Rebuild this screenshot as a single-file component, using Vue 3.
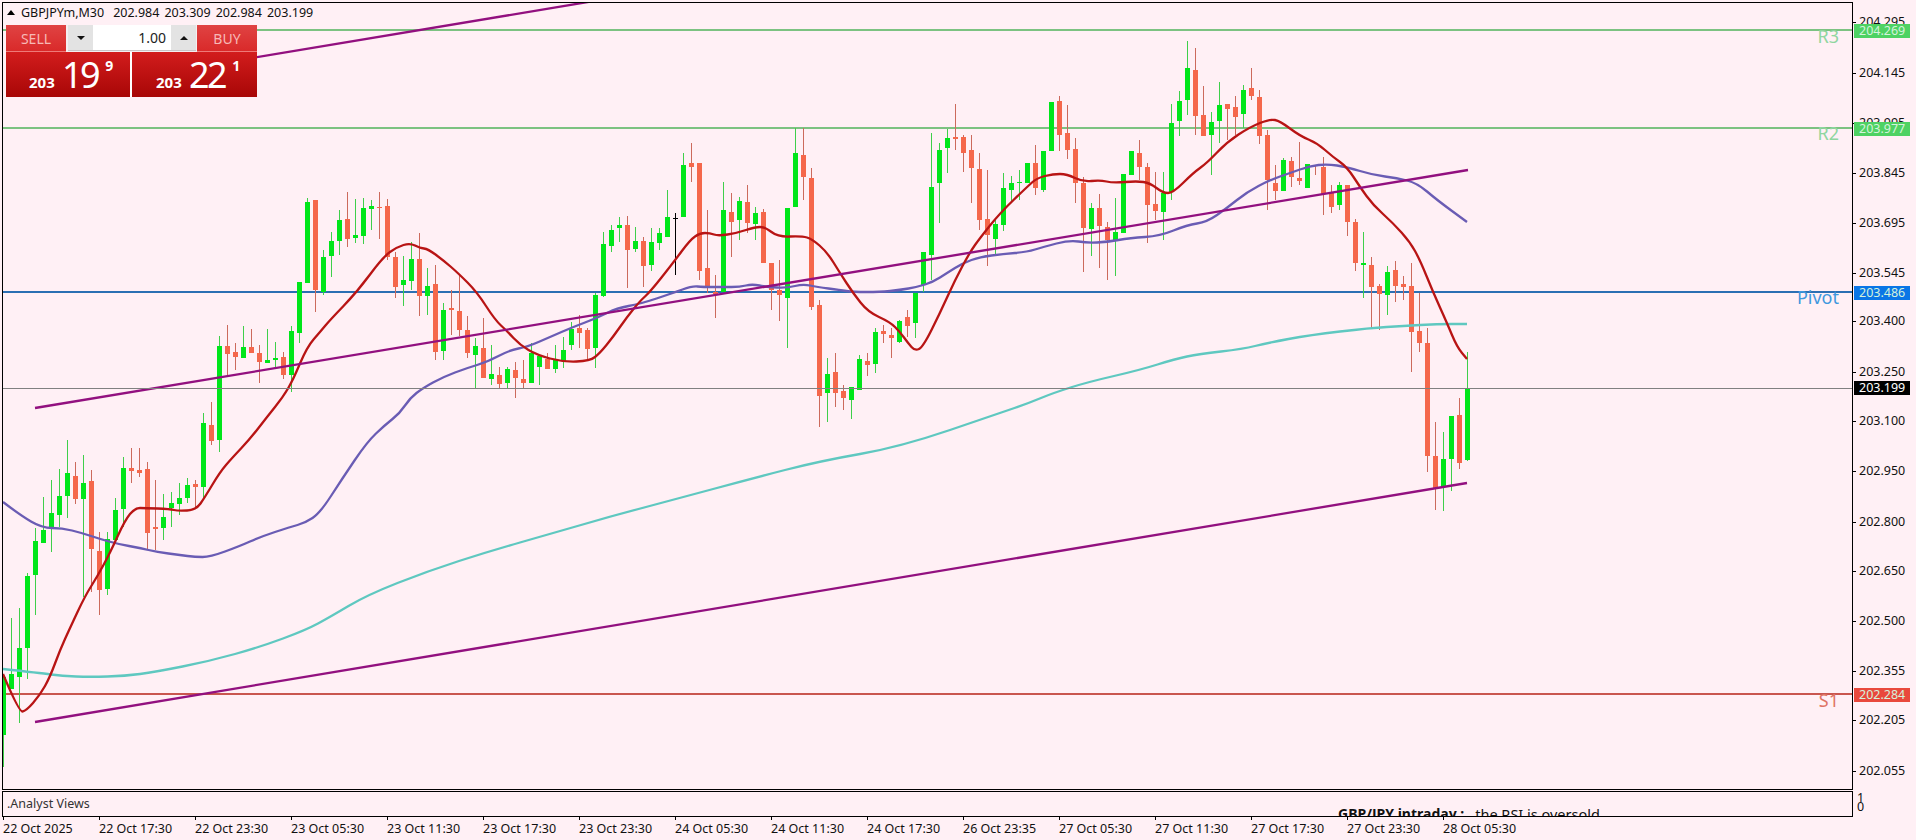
<script setup>
// bar: [direction (1 up, 0 down, 2 doji), high, body top, body bottom, low] in chart pixels
const bars = [
  [1,677,677,735,767],[1,618,674,689,689],[1,608,648,677,723],[1,573,576,648,679],[1,528,541,575,615],[1,497,530,543,543],
  [1,480,513,527,552],[1,469,496,515,527],[1,440,473,496,518],[0,462,476,499,504],[1,455,483,499,597],[0,470,481,549,592],
  [0,532,551,590,615],[1,532,539,589,595],[1,498,510,540,543],[1,457,468,509,527],[0,448,468,471,483],[0,448,470,473,477],
  [0,462,469,533,550],[0,480,527,529,550],[1,494,517,528,540],[1,492,503,508,527],[1,483,498,504,515],[1,478,485,498,503],
  [0,480,484,487,508],[1,413,423,487,500],[0,402,425,441,445],[1,336,346,440,452],[0,325,346,354,375],[0,343,352,357,370],
  [1,326,347,358,358],[0,329,347,353,353],[0,345,353,362,383],[1,329,360,363,363],[1,342,358,360,368],[0,352,357,375,379],
  [1,326,331,375,392],[1,282,282,333,343],[1,198,202,283,283],[0,200,200,290,312],[1,250,257,292,295],[1,232,241,256,277],
  [1,210,220,241,255],[0,192,219,239,247],[1,199,235,238,243],[1,198,208,236,244],[1,200,206,209,230],[0,192,207,208,239],
  [0,199,206,257,260],[0,252,257,287,298],[1,256,280,285,306],[1,242,259,281,290],[0,233,259,296,316],[1,268,286,296,315],
  [0,265,284,352,360],[1,303,310,351,360],[0,290,308,310,335],[0,275,311,330,336],[0,316,330,353,358],[1,338,346,355,389],
  [0,318,348,378,378],[1,345,374,379,385],[0,367,375,384,389],[1,367,369,383,389],[0,362,370,378,398],[0,360,379,383,389],
  [1,343,353,383,383],[1,356,356,367,385],[0,353,359,369,369],[1,345,360,369,373],[1,337,350,361,368],[1,322,329,345,350],
  [0,315,328,333,348],[0,328,330,349,359],[1,293,295,348,368],[1,232,244,296,297],[1,225,230,246,252],[1,217,225,228,242],
  [0,216,225,250,288],[1,227,241,249,252],[0,237,241,266,287],[1,228,242,265,271],[1,228,233,243,250],[1,190,217,237,237],
  [2,213,218,219,275],[1,153,165,217,217],[0,143,163,167,182],[0,163,163,271,280],[0,210,268,287,293],[0,275,292,294,318],
  [1,182,210,292,292],[0,193,212,222,257],[1,197,201,220,240],[0,185,202,223,233],[1,207,213,224,240],[0,209,212,263,263],
  [0,263,263,290,310],[0,260,290,295,321],[1,208,208,298,348],[1,128,153,207,207],[0,128,155,177,200],[0,168,178,307,310],
  [0,300,305,396,427],[1,358,374,393,422],[0,353,372,393,407],[0,385,391,398,410],[1,387,387,400,419],[1,355,359,390,390],
  [0,353,361,365,376],[1,328,332,364,373],[0,325,331,334,343],[0,328,335,338,358],[1,320,321,342,343],[0,310,317,326,337],
  [1,293,293,323,338],[1,252,252,285,292],[1,133,187,255,280],[1,143,150,183,223],[1,129,138,148,173],[0,104,137,139,150],
  [0,135,137,153,172],[0,135,150,168,203],[0,153,169,220,230],[0,170,219,235,266],[1,218,224,239,255],[1,173,188,225,231],
  [1,176,183,190,202],[1,170,182,183,200],[1,163,163,183,183],[0,145,163,188,195],[1,151,151,190,192],[1,102,102,151,151],
  [0,96,101,135,151],[0,105,133,150,159],[0,138,149,183,203],[0,177,183,228,272],[1,203,208,229,256],[0,194,208,226,268],
  [0,222,227,240,280],[1,198,232,240,276],[1,174,174,233,233],[1,151,151,175,175],[0,140,153,167,180],[0,163,167,205,243],
  [0,172,204,211,220],[1,172,193,212,240],[1,104,123,192,200],[1,91,101,121,136],[1,41,68,100,115],[0,48,70,116,135],
  [0,86,115,136,136],[1,112,122,135,175],[1,82,105,121,143],[0,104,104,109,140],[0,96,107,117,135],[1,85,90,114,128],
  [0,68,88,96,100],[0,90,97,136,144],[0,130,135,180,210],[0,165,183,191,200],[1,158,160,191,191],[0,157,161,177,187],
  [0,142,178,181,185],[1,164,164,188,188],[0,165,165,166,175],[0,157,167,194,215],[0,185,193,207,213],[1,182,185,205,210],
  [0,185,185,222,236],[0,219,222,263,271],[1,232,263,265,298],[0,257,265,287,328],[0,284,286,294,330],[1,266,272,295,315],
  [0,261,270,286,302],[0,276,284,287,300],[0,263,286,332,372],[0,293,331,343,352],[0,328,343,456,472],[0,422,456,488,510],
  [1,432,459,487,511],[1,416,416,459,491],[0,398,415,463,469],[1,352,388,460,461],
]

const redLine = [
  [3,674],[19,712],[26,711],[40,695],[50,677],[60,650],[70,628],[85,596],[97,577],[110,553],[125,520],[135,508],[145,508],
  [170,509],[178,511],[196,510],[205,497],[220,472],[232,458],[250,439],[267,417],[283,397],[293,380],[307,347],[320,332],
  [330,320],[357,292],[383,257],[397,247],[410,243],[420,248],[428,249],[443,260],[458,273],[477,292],[495,320],[507,331],
  [520,345],[537,355],[563,362],[590,361],[600,353],[613,337],[627,317],[640,301],[650,292],[673,263],[690,240],[700,233],
  [710,233],[718,236],[737,233],[755,227],[765,227],[778,237],[802,236],[812,239],[827,252],[840,273],[853,293],[868,312],
  [890,322],[900,332],[908,343],[915,351],[923,347],[940,313],[955,280],[970,252],[980,238],[1000,213],[1027,187],[1037,178],
  [1053,174],[1067,174],[1083,182],[1100,180],[1113,183],[1137,181],[1150,183],[1163,193],[1173,193],[1193,173],[1207,163],
  [1227,142],[1250,127],[1270,119],[1280,121],[1300,136],[1317,143],[1333,157],[1347,167],[1360,187],[1373,205],[1393,223],
  [1410,242],[1420,260],[1433,292],[1447,323],[1457,347],[1467,359],
]

const blueLine = [
  [3,502],[20,515],[42,528],[62,528],[82,533],[100,539],[118,544],[140,548],[157,552],[180,555],[195,557],[210,557],[240,546],
  [260,537],[290,527],[305,523],[320,513],[342,479],[367,442],[385,425],[400,413],[410,398],[423,388],[443,377],[467,368],
  [487,362],[510,350],[527,347],[550,337],[573,327],[597,318],[617,308],[640,304],[673,293],[692,286],[703,287],[723,287],
  [740,287],[752,284],[767,287],[787,288],[803,284],[817,287],[840,290],[853,292],[880,292],[900,290],[917,287],[933,282],
  [947,273],[963,263],[980,257],[1003,254],[1027,252],[1043,247],[1070,240],[1087,243],[1107,242],[1130,238],[1160,236],
  [1187,225],[1207,222],[1227,208],[1247,192],[1270,180],[1290,173],[1310,166],[1327,164],[1347,167],[1373,175],[1397,178],
  [1417,183],[1437,200],[1467,222],
]

const tealLine = [
  [3,669],[40,673],[62,676],[90,677],[125,676],[155,672],[210,661],[260,647],[306,630],[330,617],[367,595],[428,571],[490,551],
  [550,534],[612,516],[680,498],[750,479],[820,461],[900,447],[1000,413],[1029,403],[1053,393],[1088,382],[1140,370],[1175,359],
  [1199,354],[1243,349],[1267,343],[1310,335],[1370,328],[1403,326],[1437,324],[1467,324],
]

// rounds the corners between the sampled points
const toPath = (line) => {
  let d = `M${line[0][0]} ${line[0][1]}`
  for (let i = 1; i < line.length - 1; i++) {
    const midX = (line[i][0] + line[i + 1][0]) / 2
    const midY = (line[i][1] + line[i + 1][1]) / 2
    d += ` Q${line[i][0]} ${line[i][1]} ${midX} ${midY}`
  }
  const last = line[line.length - 1]
  return `${d} L${last[0]} ${last[1]}`
}

const levels = [
  { name: "R3", y: 30, price: "204.269", line: "#7cc281", text: "#8fd6a0", tag: "#4ed263", base: 43 },
  { name: "R2", y: 128, price: "203.977", line: "#7cc281", text: "#8fd6a0", tag: "#4ed263", base: 140 },
  { name: "Pivot", y: 292, price: "203.486", line: "#2b6fb3", text: "#3f98de", tag: "#0a76e6", base: 304 },
  { name: "S1", y: 694, price: "202.284", line: "#c9564f", text: "#df7464", tag: "#e9483c", base: 707 },
]

const axisPrices = [
  ["204.295", 22], ["204.145", 73], ["203.995", 123], ["203.845", 173], ["203.695", 223], ["203.545", 273],
  ["203.400", 321], ["203.250", 372], ["203.100", 421], ["202.950", 471], ["202.800", 522], ["202.650", 571],
  ["202.500", 621], ["202.355", 671], ["202.205", 720], ["202.055", 771],
]

const times = [
  "22 Oct 2025", "22 Oct 17:30", "22 Oct 23:30", "23 Oct 05:30", "23 Oct 11:30", "23 Oct 17:30", "23 Oct 23:30", "24 Oct 05:30",
  "24 Oct 11:30", "24 Oct 17:30", "26 Oct 23:35", "27 Oct 05:30", "27 Oct 11:30", "27 Oct 17:30", "27 Oct 23:30", "28 Oct 05:30",
]

const bodyColor = (dir) => (dir === 1 ? "#00e61a" : dir === 0 ? "#f5674b" : "#000")
const wickColor = (dir) => (dir === 1 ? "#3fcf4a" : dir === 0 ? "#cc6a5c" : "#000")
</script>

<template>
  <div class="terminal">
    <div class="chart-row">
      <div class="plot">
        <svg class="plot-svg" width="1849" height="786" viewBox="3 3 1849 786">
          <line v-for="l in levels" :key="l.name" x1="3" x2="1852" :y1="l.y" :y2="l.y" :stroke="l.line" stroke-width="2" />
          <g shape-rendering="crispEdges">
            <g v-for="(b, i) in bars" :key="i">
              <rect :x="3 + 8 * i" :y="b[1]" width="1" :height="b[4] - b[1]" :fill="wickColor(b[0])" />
              <rect v-if="b[0] !== 2" :x="1 + 8 * i" :y="b[2]" width="5" :height="b[3] - b[2]" :fill="bodyColor(b[0])" />
              <rect v-else :x="1 + 8 * i" :y="b[2]" width="5" height="1" fill="#000" />
            </g>
          </g>
          <g fill="none" stroke-width="2.3" stroke-linejoin="round">
            <path :d="toPath(tealLine)" stroke="#5fc8c0" />
            <path :d="toPath(blueLine)" stroke="#6a5cb4" />
            <path :d="toPath(redLine)" stroke="#b81414" />
          </g>
          <g stroke="#92107f" stroke-width="2.3">
            <line x1="35" y1="94" x2="600" y2="0" />
            <line x1="35" y1="408" x2="1468" y2="170" />
            <line x1="35" y1="722" x2="1467" y2="483" />
          </g>
          <line x1="3" x2="1852" y1="388.5" y2="388.5" stroke="#808080" stroke-width="1" />
          <text
            v-for="l in levels"
            :key="'t' + l.name"
            x="1839"
            :y="l.base"
            text-anchor="end"
            class="level-name"
            :fill="l.text"
          >{{ l.name }}</text>
        </svg>

        <div class="symbol-bar">
          <span class="collapse-arrow"></span>
          <span class="symbol">GBPJPYm,M30</span>
          <span>202.984</span>
          <span>203.309</span>
          <span>202.984</span>
          <span>203.199</span>
        </div>

        <div class="trade-panel">
          <div class="trade-top">
            <div class="side-btn">SELL</div>
            <div class="lot">
              <div class="lot-step"><span class="arrow-down"></span></div>
              <div class="lot-value">1.00</div>
              <div class="lot-step"><span class="arrow-up"></span></div>
            </div>
            <div class="side-btn">BUY</div>
          </div>
          <div class="trade-bottom">
            <div class="quote quote-sell">
              <span class="quote-head">203</span>
              <span class="quote-big">19</span>
              <span class="quote-sup">9</span>
            </div>
            <div class="quote quote-buy">
              <span class="quote-head">203</span>
              <span class="quote-big">22</span>
              <span class="quote-sup">1</span>
            </div>
          </div>
        </div>
      </div>

      <div class="price-axis">
        <div
          v-for="p in axisPrices"
          :key="p[0]"
          class="axis-item"
          :style="{ top: p[1] - 9 + 'px' }"
        >
          <span class="axis-tick"></span>{{ p[0] }}
        </div>
        <div
          v-for="l in levels"
          :key="l.price"
          class="price-tag"
          :style="{ top: l.y - 8 + 'px', background: l.tag }"
        >{{ l.price }}</div>
        <div class="price-tag price-now" style="top: 379px">203.199</div>
      </div>
    </div>

    <div class="sub-row">
      <div class="sub-window">
        <div class="sub-title">.Analyst Views</div>
        <div class="sub-note"><b>GBP/JPY intraday :</b><span>the RSI is oversold</span></div>
      </div>
      <div class="sub-axis">
        <span>1</span>
        <span>0</span>
      </div>
    </div>

    <div class="time-axis">
      <div v-for="t in times" :key="t" class="time-item">{{ t }}</div>
    </div>
  </div>
</template>

<style scoped>
.terminal {
  width: 1916px;
  height: 840px;
  box-sizing: border-box;
  padding: 2px 0 0 2px;
  overflow: hidden;
  background: #fff0f5;
  color: #111;
  font-family: "Noto Sans", "Liberation Sans", sans-serif;
  font-size: 12.5px;
}

.chart-row {
  display: flex;
}

.plot {
  position: relative;
  width: 1851px;
  height: 788px;
  box-sizing: border-box;
  border: 1px solid #000;
  overflow: hidden;
}

.plot-svg {
  display: block;
}

.level-name {
  font-size: 18px;
  font-family: "Noto Sans", sans-serif;
}

.symbol-bar {
  position: absolute;
  left: 4px;
  top: 0;
  display: flex;
  align-items: center;
  gap: 5px;
  height: 18px;
}

.symbol {
  margin-right: 4px;
}

.collapse-arrow {
  width: 0;
  height: 0;
  margin-right: 1px;
  border-left: 4px solid transparent;
  border-right: 4px solid transparent;
  border-bottom: 5px solid #000;
}

.trade-panel {
  position: absolute;
  left: 3px;
  top: 22px;
  width: 251px;
}

.trade-top {
  display: flex;
  height: 27px;
  background: #f4eff1;
}

.side-btn {
  width: 60px;
  display: flex;
  align-items: center;
  justify-content: center;
  font-size: 14px;
  color: #f7b9b6;
  background: linear-gradient(#e04343, #d92a2a);
  border-bottom: 1px solid #ee7a78;
  box-sizing: border-box;
}

.lot {
  flex: 1;
  display: flex;
  margin: 0 1px 0 2px;
  height: 26px;
  border-bottom: 1px solid #c9c5c6;
  box-sizing: border-box;
}

.lot-step {
  width: 25px;
  display: flex;
  align-items: center;
  justify-content: center;
  background: #e3e3e3;
}

.lot-value {
  flex: 1;
  background: #fff;
  text-align: right;
  padding-right: 5px;
  font-size: 14px;
  line-height: 25px;
  color: #222;
}

.arrow-down,
.arrow-up {
  width: 0;
  height: 0;
  border-left: 4px solid transparent;
  border-right: 4px solid transparent;
}

.arrow-down {
  border-top: 4px solid #111;
}

.arrow-up {
  border-bottom: 4px solid #111;
}

.trade-bottom {
  display: flex;
  gap: 2px;
  height: 45px;
  background: #fff;
}

.quote {
  flex: 1;
  display: flex;
  align-items: baseline;
  height: 45px;
  color: #fff;
  background: linear-gradient(#d21d1d, #a80606);
}

.quote-sell {
  padding-left: 23px;
}

.quote-buy {
  padding-left: 24px;
}

.quote-head {
  width: 33px;
  font-size: 15px;
  font-weight: 700;
}

.quote-big {
  font-size: 36px;
  line-height: 45px;
  letter-spacing: -2.5px;
}

.quote-sup {
  align-self: flex-start;
  margin: 5px 0 0 7px;
  font-size: 14px;
  line-height: 18px;
  font-weight: 700;
}

.price-axis {
  position: relative;
  flex: 1;
}

.axis-item {
  position: absolute;
  left: 0;
  display: flex;
  align-items: center;
  height: 14px;
  line-height: 14px;
}

.axis-tick {
  width: 3px;
  height: 1px;
  margin-right: 3px;
  background: #000;
}

.price-tag {
  position: absolute;
  left: 1px;
  width: 56px;
  height: 14px;
  box-sizing: border-box;
  padding-left: 5px;
  line-height: 14px;
  color: #d4f3dc;
}

.price-now {
  background: #000;
  color: #fff;
}

.sub-row {
  display: flex;
  margin-top: 1px;
}

.sub-window {
  display: flex;
  align-items: flex-start;
  width: 1851px;
  height: 26px;
  box-sizing: border-box;
  border: 1px solid #000;
  overflow: hidden;
}

.sub-title {
  width: 1335px;
  padding-left: 4px;
  box-sizing: border-box;
  line-height: 23px;
  color: #333;
}

.sub-note {
  display: flex;
  gap: 11px;
  margin-top: 14px;
  font-size: 14px;
  line-height: 16px;
  white-space: nowrap;
}

.sub-note span {
  font-size: 14.5px;
}

.sub-axis {
  display: flex;
  flex-direction: column;
  padding: 2px 0 0 4px;
  font-size: 12.5px;
  line-height: 9px;
}

.time-axis {
  display: flex;
  margin-left: 1px;
}

.time-item {
  width: 96px;
  flex: none;
  white-space: nowrap;
  text-indent: -1px;
  line-height: 17px;
}

.time-item::before {
  content: "";
  display: block;
  width: 1px;
  height: 3px;
  background: #000;
}
</style>

<style>
html,
body {
  margin: 0;
  background: #fff0f5;
}
</style>
